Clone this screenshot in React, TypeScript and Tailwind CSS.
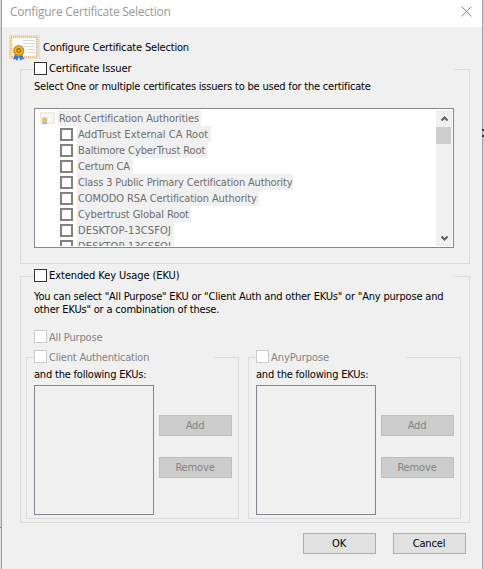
import React from "react";
import clsx from "clsx";

const issuers = [
  { name: "AddTrust External CA Root", style: "w-[134px] tracking-[0.03px]" },
  { name: "Baltimore CyberTrust Root", style: "w-[131px] tracking-[-0.09px]" },
  { name: "Certum CA", style: "w-[56px] tracking-[-0.2px]" },
  {
    name: "Class 3 Public Primary Certification Authority",
    style: "w-[216px] tracking-[-0.16px]",
  },
  {
    name: "COMODO RSA Certification Authority",
    style: "w-[182px] tracking-[-0.1px]",
  },
  { name: "Cybertrust Global Root", style: "w-[114px] tracking-[-0.08px]" },
  { name: "DESKTOP-13CSFOJ", style: "w-[97px] tracking-[0.13px]" },
  { name: "DESKTOP-13CSFOJ", style: "w-[97px] tracking-[0.13px]" },
];

const CertIcon = ({ className }: { className: string }) => (
  <svg viewBox="0 0 31 26" className={className}>
    <rect x="0" y="0" width="31" height="24" fill="#e6ddd5" />
    <rect x="1" y="1" width="28" height="22" fill="#fbeed6" />
    <rect
      x="2"
      y="2"
      width="26"
      height="20"
      fill="none"
      stroke="#e5b36b"
      strokeWidth="1.500"
      strokeDasharray="1.200 .8"
    />
    <rect x="4" y="3.500" width="22.500" height="17" fill="#fff" />
    <path
      d="M14 5.500h12M14 8.500h12M14 11.500h12M18 14.500h8M18 17.500h8"
      stroke="#d9dce2"
    />
    <path d="M6 19 4 24.500l2.500-.5 1.500 2 2.500-6z" fill="#2f78e6" />
    <path d="M9.500 20l2 6 1.500-2 2.500.5-3-6z" fill="#2f78e6" />
    <circle cx="9.700" cy="15.700" r="5.600" fill="#d08f10" />
    <circle cx="9.700" cy="15.500" r="4.300" fill="#efb62c" />
    <circle cx="9.700" cy="15.500" r="2" fill="#e9a91c" stroke="#8f5907" />
  </svg>
);

const CheckBox = ({ className }: { className: string }) => (
  <span className={clsx("block size-[13px] shrink-0 bg-white", className)} />
);

type GroupProps = {
  label: string;
  tracking: string;
  disabled?: boolean;
  pad: string;
  gap: string;
  className: string;
  children: React.ReactNode;
};

const Group = ({
  label,
  tracking,
  disabled,
  pad,
  gap,
  className,
  children,
}: GroupProps) => (
  <section className={clsx("flex flex-col", className)}>
    <div className="flex h-[13px] shrink-0">
      <div
        className={clsx(
          "mt-[7px] h-[6px] shrink-0 border-t border-l border-[#dcdcdc]",
          pad
        )}
      />
      <CheckBox
        className={
          disabled ? "border border-[#cccccc]" : "border border-[#333333]"
        }
      />
      <span
        className={clsx(
          "ml-[2px] flex-1 whitespace-nowrap",
          tracking,
          disabled ? "leading-[15px] text-[#838383]" : "leading-[13px]"
        )}
      >
        {label}
      </span>
      <div
        className={clsx(
          "mt-[7px] h-[6px] shrink-0 border-t border-r border-[#dcdcdc]",
          gap
        )}
      />
    </div>
    <div className="flex-1 border-x border-b border-[#dcdcdc]">{children}</div>
  </section>
);

const Button = ({
  label,
  disabled,
}: {
  label: string;
  disabled?: boolean;
}) => (
  <button
    className={clsx(
      "flex h-[21px] w-[73px] items-center justify-center border pt-[2px] pr-px tracking-[-0.15px]",
      disabled
        ? "border-[#bfbfbf] bg-[#cccccc] text-[#838383]"
        : "border-[#adadad] bg-[#e1e1e1]"
    )}
  >
    {label}
  </button>
);

const UsageGroup = ({
  label,
  tracking,
  gap,
}: {
  label: string;
  tracking: string;
  gap: string;
}) => (
  <Group
    label={label}
    tracking={tracking}
    disabled
    pad="w-[8px]"
    gap={gap}
    className="h-[169px] w-[213px]"
  >
    <p className="mt-[5px] ml-[7px] leading-[13px] tracking-[-0.2px]">
      and the following EKUs:
    </p>
    <div className="mt-[4px] ml-[7px] flex gap-[5px]">
      <div className="h-[130px] w-[120px] border border-[#828790]" />
      <div className="flex flex-col gap-[21px] pt-[30px]">
        <Button label="Add" disabled />
        <Button label="Remove" disabled />
      </div>
    </div>
  </Group>
);

const ScrollBar = () => (
  <div className="mt-px mr-px flex h-[136px] w-[16px] flex-col items-center bg-[#f0f0f0]">
    <svg viewBox="0 0 7 6" className="mt-[6px] h-[6px] w-[7px] shrink-0">
      <path d="M.5 4.500 3.500 1.500l3 3" fill="none" stroke="#606060" strokeWidth="2" />
    </svg>
    <div className="mt-[5px] mr-px h-[17px] w-[15px] shrink-0 bg-[#cdcdcd]" />
    <svg viewBox="0 0 7 6" className="mt-auto mb-[5px] h-[6px] w-[7px] shrink-0">
      <path d="M.5 1.500l3 3 3-3" fill="none" stroke="#606060" strokeWidth="2" />
    </svg>
  </div>
);

const IssuerTree = () => (
  <div className="mt-[14px] ml-[13px] flex h-[140px] w-[420px] justify-between border border-[#828790] bg-white">
    <div className="mt-px h-[136px] overflow-hidden pl-[5px] text-[#6d6d6d]">
      <div className="flex h-[16px]">
        <CertIcon className="mt-[2px] h-[13px] w-[15px] opacity-60" />
        <span className="ml-[3px] w-[143px] bg-[#f0f0f0] pl-px leading-[18px] tracking-[-0.1px] whitespace-nowrap">
          Root Certification Authorities
        </span>
      </div>
      {issuers.map((issuer, i) => (
        <div key={i} className="flex h-[16px] pl-[20px]">
          <CheckBox className="mt-[2px] border-2 border-[#808080]" />
          <span
            className={clsx(
              "ml-[4px] bg-[#f0f0f0] pl-px leading-[18px] whitespace-nowrap",
              issuer.style
            )}
          >
            {issuer.name}
          </span>
        </div>
      ))}
    </div>
    <ScrollBar />
  </div>
);

const App = () => {
  return (
    <div className="flex h-[569px] w-[484px] overflow-hidden bg-[#f0f0f0] font-['DejaVu_Sans_Condensed','DejaVu_Sans',sans-serif] text-[11px] text-black">
      <div className="flex w-px flex-col">
        <div className="h-[527px] bg-[#d4d4d4]" />
        <div className="h-px bg-[#888888]" />
        <div className="flex-1 bg-[#e0e0e0]" />
      </div>
      <div className="w-px bg-[#a0a0a0]" />
      <main className="flex w-[480px] flex-col">
        <header className="flex h-[27px] shrink-0 justify-between bg-white pr-[10px] pl-[8px]">
          <h1 className="font-['Open_Sans',sans-serif] text-[12px] leading-[24px] tracking-[-0.26px] text-[#999999]">
            Configure Certificate Selection
          </h1>
          <svg viewBox="0 0 11 11" className="mt-[6px] size-[11px]">
            <path d="M.5.5l10 10M10.500.5l-10 10" stroke="#8a8a8a" />
          </svg>
        </header>
        <div className="mt-[8px] flex h-[26px] shrink-0 pl-[7px]">
          <CertIcon className="h-[26px] w-[31px]" />
          <span className="ml-[3px] leading-[25px] tracking-[-0.17px]">
            Configure Certificate Selection
          </span>
        </div>
        <Group
          label="Certificate Issuer"
          tracking="tracking-[-0.1px]"
          pad="w-[14px]"
          gap="w-[16px]"
          className="mt-px ml-[18px] h-[202px] w-[450px] shrink-0"
        >
          <p className="mt-[5px] ml-[13px] leading-[14px] tracking-[-0.2px] whitespace-nowrap">
            Select One or multiple certificates issuers to be used for the
            certificate
          </p>
          <IssuerTree />
        </Group>
        <Group
          label="Extended Key Usage (EKU)"
          tracking="tracking-[-0.09px]"
          pad="w-[14px]"
          gap="w-[16px]"
          className="mt-[5px] ml-[18px] h-[254px] w-[450px] shrink-0"
        >
          <p className="mt-[8px] ml-[13px] leading-[13px] tracking-[-0.19px] whitespace-nowrap">
            You can select "All Purpose" EKU or "Client Auth and other EKUs" or
            "Any purpose and
            <br />
            other EKUs" or a combination of these.
          </p>
          <div className="mt-[14px] ml-[13px] flex h-[13px] gap-[2px] leading-[15px] tracking-[-0.15px] text-[#838383]">
            <CheckBox className="border border-[#cccccc]" />
            All Purpose
          </div>
          <div className="mt-[7px] ml-[5px] flex gap-[9px]">
            <UsageGroup
              label="Client Authentication"
              tracking="tracking-[-0.2px]"
              gap="w-[25px]"
            />
            <UsageGroup
              label="AnyPurpose"
              tracking="tracking-[-0.05px]"
              gap="w-[55px]"
            />
          </div>
        </Group>
        <footer className="mt-[10px] ml-[301px] flex gap-[17px]">
          <Button label="OK" />
          <Button label="Cancel" />
        </footer>
      </main>
      <div className="w-px bg-[#a0a0a0]" />
      <div className="w-px bg-[#d4d4d4]">
        <div className="mt-[129px] -ml-px h-[2px] w-[2px] bg-[#333333]" />
        <div className="mt-[4px] -ml-px h-[2px] w-[2px] bg-[#333333]" />
      </div>
    </div>
  );
};

export default App;
